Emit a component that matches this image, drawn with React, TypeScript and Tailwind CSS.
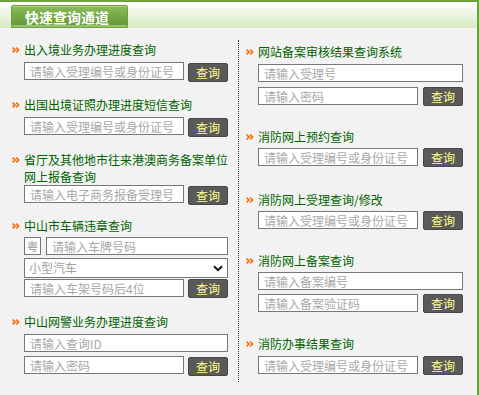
import React from "react";

const FONT = { fontFamily: '"Noto Sans CJK SC", "Noto Sans", sans-serif' };

function ArrowSvg() {
  return (
    <svg width="8" height="6" viewBox="0 0 8 6">
      <path d="M0.6 0.6 L3 3 L0.6 5.4 M4.2 0.6 L6.6 3 L4.2 5.4" stroke="#ff6600" strokeWidth="1.6" fill="none" />
    </svg>
  );
}

function Title({ children }: { children: React.ReactNode }) {
  return (
    <div className="flex items-center text-[12px] text-[#006400] leading-[16px]">
      <span className="w-[12px] flex items-center shrink-0">
        <ArrowSvg />
      </span>
      <span>{children}</span>
    </div>
  );
}

function Input({ ph, w }: { ph: string; w: string }) {
  return (
    <input
      placeholder={ph}
      className={`${w} block h-[18px] border border-[#777777] bg-white px-[5px] text-[12px] leading-[16px] outline-none placeholder:text-[#a8a8a8] shrink-0`}
      style={FONT}
    />
  );
}

function Btn({ cls = "" }: { cls?: string }) {
  return (
    <button
      className={`w-[40px] h-[19px] rounded-[2px] bg-[#5a5a5a] border border-[#484848] text-[#ffff88] text-[12px] leading-[16px] flex items-center justify-center shrink-0 ${cls}`}
      style={FONT}
    >
      查询
    </button>
  );
}

export default function App() {
  return (
    <div className="w-[479px] h-[395px] bg-[#f2f2f2] border-t-2 border-r-2 border-[#6ca33c] overflow-hidden" style={FONT}>
      {/* header */}
      <div className="h-[26px] bg-linear-to-b from-white to-[#d7eac0] flex items-start pl-[11px]">
        <div className="mt-[3px] w-[117px] h-[23px] rounded-t-[2px] border border-[#6f9f45] bg-linear-to-b from-[#8dbb5c] via-[#74a845] to-[#609735] flex items-center pl-[13px] text-white font-bold text-[14px] leading-[16px] shadow-[inset_0_1px_0_#b0d58a,inset_0_-2px_0_#96c368]">
          快速查询通道
        </div>
      </div>

      {/* body */}
      <div className="flex">
        {/* left column */}
        <div className="w-[238px] pl-[12px] flex flex-col">
          <div className="mt-[14px]">
            <Title>出入境业务办理进度查询</Title>
            <div className="mt-[4px] pl-[12px] flex items-start">
              <Input ph="请输入受理编号或身份证号" w="w-[160px]" />
              <Btn cls="ml-[4px] mt-[1px]" />
            </div>
          </div>

          <div className="mt-[15px]">
            <Title>出国出境证照办理进度短信查询</Title>
            <div className="mt-[4px] pl-[12px] flex items-start">
              <Input ph="请输入受理编号或身份证号" w="w-[160px]" />
              <Btn cls="ml-[4px] mt-[1px]" />
            </div>
          </div>

          <div className="mt-[14px]">
            <div className="flex items-start text-[12px] text-[#006400] leading-[17px]">
              <span className="w-[12px] h-[17px] flex items-center shrink-0">
                <ArrowSvg />
              </span>
              <span>
                省厅及其他地市往来港澳商务备案单位
                <br />
                网上报备查询
              </span>
            </div>
            <div className="mt-0 pl-[12px] flex items-start">
              <Input ph="请输入电子商务报备受理号" w="w-[160px]" />
              <Btn cls="ml-[4px] mt-[1px]" />
            </div>
          </div>

          <div className="mt-[13px]">
            <Title>中山市车辆违章查询</Title>
            <div className="mt-[3px] pl-[12px] flex flex-col">
              <div className="flex items-start">
                <div className="w-[17px] h-[18px] border border-[#777777] bg-white flex items-center justify-center text-[11px] text-[#999999] leading-none">
                  粤
                </div>
                <Input ph="请输入车牌号码" w="w-[182px] ml-[5px]" />
              </div>
              <div className="relative mt-[3px] w-[204px] h-[20px]">
                <select
                  className="appearance-none block w-[204px] h-[20px] border border-[#777777] bg-white pl-[4px] py-0 text-[12px] leading-[18px] text-[#a0a0a0] outline-none"
                  style={FONT}
                  defaultValue="小型汽车"
                >
                  <option>小型汽车</option>
                  <option>大型汽车</option>
                </select>
                <svg className="absolute right-[5px] top-[7px] pointer-events-none" width="10" height="7" viewBox="0 0 10 7">
                  <path d="M1 1.2 L5 5.2 L9 1.2" stroke="#111" strokeWidth="2" fill="none" />
                </svg>
              </div>
              <div className="mt-[1px] flex items-start">
                <Input ph="请输入车架号码后4位" w="w-[160px]" />
                <Btn cls="ml-[4px]" />
              </div>
            </div>
          </div>

          <div className="mt-[16px]">
            <Title>中山网警业务办理进度查询</Title>
            <div className="mt-[4px] pl-[12px] flex flex-col">
              <Input ph="请输入查询ID" w="w-[204px]" />
              <div className="mt-[4px] flex items-start">
                <Input ph="请输入密码" w="w-[160px]" />
                <Btn cls="ml-[4px] mt-[1px]" />
              </div>
            </div>
          </div>
        </div>

        {/* divider */}
        <div className="mt-[12px] h-[342px] border-l border-dotted border-[#333333]" />

        {/* right column */}
        <div className="flex-1 pl-[7px] flex flex-col">
          <div className="mt-[16px]">
            <Title>网站备案审核结果查询系统</Title>
            <div className="mt-[4px] pl-[12px] flex flex-col">
              <Input ph="请输入受理号" w="w-[205px]" />
              <div className="mt-[5px] flex items-start">
                <Input ph="请输入密码" w="w-[160px]" />
                <Btn cls="ml-[5px] w-[39px]" />
              </div>
            </div>
          </div>

          <div className="mt-[23px]">
            <Title>消防网上预约查询</Title>
            <div className="mt-[3px] pl-[12px] flex items-start">
              <Input ph="请输入受理编号或身份证号" w="w-[160px]" />
              <Btn cls="ml-[5px]" />
            </div>
          </div>

          <div className="mt-[25px]">
            <Title>消防网上受理查询/修改</Title>
            <div className="mt-[3px] pl-[12px] flex items-start">
              <Input ph="请输入受理编号或身份证号" w="w-[160px]" />
              <Btn cls="ml-[5px]" />
            </div>
          </div>

          <div className="mt-[23px]">
            <Title>消防网上备案查询</Title>
            <div className="mt-[3px] pl-[12px] flex flex-col">
              <Input ph="请输入备案编号" w="w-[205px]" />
              <div className="mt-[4px] flex items-start">
                <Input ph="请输入备案验证码" w="w-[160px]" />
                <Btn cls="ml-[5px]" />
              </div>
            </div>
          </div>

          <div className="mt-[23px]">
            <Title>消防办事结果查询</Title>
            <div className="mt-[4px] pl-[12px] flex items-start">
              <Input ph="请输入受理编号或身份证号" w="w-[160px]" />
              <Btn cls="ml-[5px]" />
            </div>
          </div>
        </div>
      </div>
    </div>
  );
}
